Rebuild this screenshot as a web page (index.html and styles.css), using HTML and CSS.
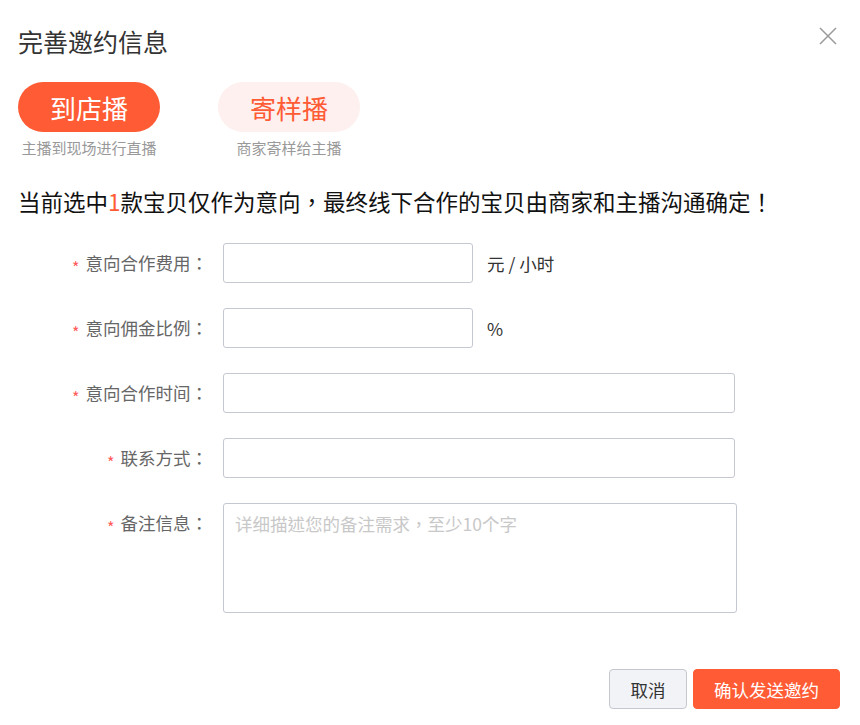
FILE: index.html
```html
<!DOCTYPE html>
<html lang="zh-CN">
<head>
<meta charset="utf-8">
<title>完善邀约信息</title>
<link rel="stylesheet" href="styles.css">
</head>
<body>
<div class="dialog">
  <div class="header">
    <h1 class="title">完善邀约信息</h1>
    <button class="close" type="button" aria-label="关闭">
      <svg width="18" height="18" viewBox="0 0 18 18"><path d="M1 1 L17 17 M17 1 L1 17" stroke="#9a9a9a" stroke-width="1.5" fill="none"/></svg>
    </button>
  </div>

  <div class="modes">
    <div class="mode">
      <div class="pill pill-active">到店播</div>
      <div class="mode-desc">主播到现场进行直播</div>
    </div>
    <div class="mode">
      <div class="pill pill-light">寄样播</div>
      <div class="mode-desc">商家寄样给主播</div>
    </div>
  </div>

  <p class="notice">当前选中<span class="num">1</span>款宝贝仅作为意向<span class="punct" lang="zh-TW">，</span>最终线下合作的宝贝由商家和主播沟通确定<span class="punct" lang="zh-TW">！</span></p>

  <div class="form">
    <label class="label"><span class="req">*</span>意向合作费用<span class="punct" lang="zh-TW">：</span></label>
    <div class="field"><input class="input input-short" type="text"><span class="unit">元 / 小时</span></div>

    <label class="label"><span class="req">*</span>意向佣金比例<span class="punct" lang="zh-TW">：</span></label>
    <div class="field"><input class="input input-short" type="text"><span class="unit">%</span></div>

    <label class="label"><span class="req">*</span>意向合作时间<span class="punct" lang="zh-TW">：</span></label>
    <div class="field"><input class="input input-long" type="text"></div>

    <label class="label"><span class="req">*</span>联系方式<span class="punct" lang="zh-TW">：</span></label>
    <div class="field"><input class="input input-long" type="text"></div>

    <label class="label"><span class="req">*</span>备注信息<span class="punct" lang="zh-TW">：</span></label>
    <div class="field"><textarea class="textarea" lang="zh-TW" placeholder="详细描述您的备注需求，至少10个字"></textarea></div>
  </div>

  <div class="footer">
    <button class="btn btn-cancel" type="button">取消</button>
    <button class="btn btn-primary" type="button">确认发送邀约</button>
  </div>
</div>
</body>
</html>
```

FILE: styles.css
```css
* { box-sizing: border-box; }

html, body {
  margin: 0;
  padding: 0;
  background: #fff;
}

body {
  font-family: "Noto Sans CJK SC", "Noto Sans", sans-serif;
  color: #333;
}

.dialog {
  width: 860px;
  padding: 0 20px 0 18px;
}

.header {
  display: flex;
  justify-content: space-between;
  align-items: flex-start;
  padding-top: 24px;
}

.title {
  margin: 0;
  font-size: 25px;
  line-height: 34px;
  font-weight: 400;
  color: #333;
}

.close {
  margin: 3px 3px 0 0;
  padding: 0;
  border: 0;
  background: transparent;
  width: 18px;
  height: 18px;
  display: flex;
}

.modes {
  display: flex;
  gap: 58px;
  margin-top: 24px;
}

.mode {
  width: 142px;
  display: flex;
  flex-direction: column;
  align-items: center;
}

.pill {
  width: 142px;
  height: 50px;
  border-radius: 25px;
  display: flex;
  align-items: center;
  justify-content: center;
  font-size: 26px;
}

.pill-active {
  background: #ff5b35;
  color: #fff;
}

.pill-light {
  background: #fdf0ee;
  color: #ff5b35;
}

.mode-desc {
  margin-top: 5px;
  font-size: 15px;
  line-height: 21px;
  color: #999;
  white-space: nowrap;
}

.notice {
  margin: 28px 0 0;
  font-size: 22.5px;
  line-height: 30px;
  color: #111;
  white-space: nowrap;
}

.punct {
  font-family: "Noto Sans CJK TC", "Noto Sans CJK SC", sans-serif;
}

.num { color: #ff5b35; }

.form {
  margin-top: 27px;
  display: grid;
  grid-template-columns: 190px 1fr;
  column-gap: 15px;
  row-gap: 25px;
  align-items: start;
}

.label {
  height: 40px;
  text-align: right;
  font-size: 17.5px;
  line-height: 40px;
  color: #666;
  white-space: nowrap;
}

.req {
  color: #ff5b5b;
  font-size: 16px;
  line-height: 1;
  margin-right: 6px;
  vertical-align: -4px;
}

.field {
  display: flex;
  align-items: center;
}

.input {
  height: 40px;
  border: 1px solid #c5c8d0;
  border-radius: 3px;
  background: #fff;
  font-family: inherit;
  font-size: 17.5px;
  padding: 0 11px;
  outline: none;
}

.input-short { width: 250px; }
.input-long { width: 512px; }

.unit {
  margin-left: 14px;
  font-size: 17.5px;
  color: #333;
  white-space: nowrap;
}

.textarea {
  width: 514px;
  height: 110px;
  border: 1px solid #c5c8d0;
  border-radius: 3px;
  font-family: "Noto Sans CJK TC", "Noto Sans CJK SC", sans-serif;
  font-size: 17.5px;
  line-height: 24px;
  padding: 8px 11px;
  resize: none;
  outline: none;
  color: #333;
}

.textarea::placeholder { color: #c8c8c8; }

.footer {
  margin-top: 56px;
  display: flex;
  justify-content: flex-end;
  gap: 6px;
}

.btn {
  height: 40px;
  border-radius: 4px;
  font-family: inherit;
  font-size: 17.5px;
  padding: 0;
  cursor: pointer;
}

.btn-cancel {
  width: 78px;
  background: #f2f3f7;
  border: 1px solid #c4c7cf;
  color: #333;
}

.btn-primary {
  width: 147px;
  background: #ff5b35;
  border: 1px solid #ff5b35;
  color: #fff;
}
```
